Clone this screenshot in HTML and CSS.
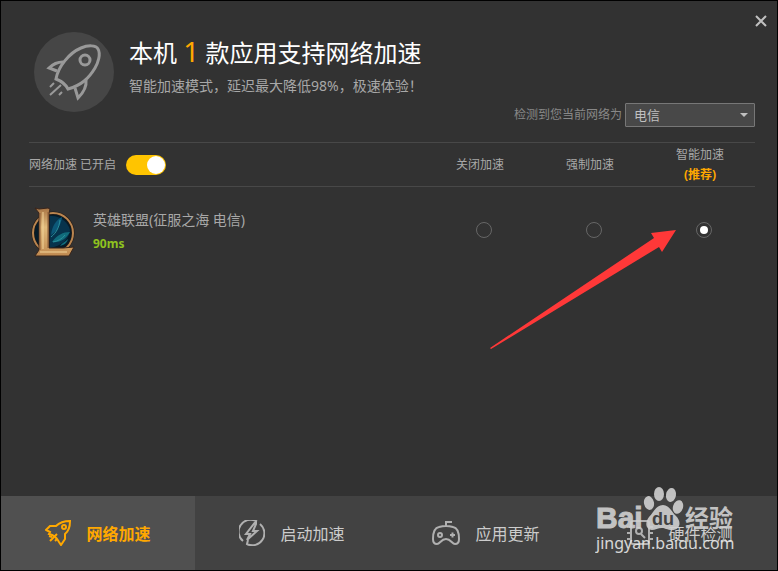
FILE: index.html
```html
<!DOCTYPE html>
<html lang="zh-CN">
<head>
  <meta charset="UTF-8">
  <meta name="viewport" content="width=device-width, initial-scale=1.0">
  <title>网络加速</title>
  <link rel="stylesheet" href="styles.css">
</head>
<body>
  <div class="window">
    <button class="close" type="button" aria-label="关闭">
      <svg width="12" height="12" viewBox="0 0 12 12"><path d="M1 1l10 10M11 1L1 11"/></svg>
    </button>

    <header class="header">
      <div class="avatar">
        <svg width="80" height="80" viewBox="0 0 80 80">
          <path d="M22 47C24 35 35 21 47 16C54 13 62 13 64 17C67 22 64 31 61 36C55 46 48 53 34 57C31 51 27 49 22 47Z"/>
          <circle cx="51" cy="28" r="5"/>
          <path d="M29 30C23 30 18 33 15 36L23 39M52 48C53 56 48 62 44 66L41 56"/>
          <path class="thin" d="M16 55l4-4M16 63l11-10M25 63l3-3"/>
        </svg>
      </div>
      <div class="intro">
        <h1>本机 <span class="count">1</span> 款应用支持网络加速</h1>
        <p>智能加速模式，延迟最大降低98%，极速体验！</p>
      </div>
    </header>

    <main class="main">
      <div class="network">
        <label for="isp">检测到您当前网络为</label>
        <select id="isp">
          <option>电信</option>
          <option>联通</option>
          <option>移动</option>
        </select>
      </div>

      <table class="games">
        <thead>
          <tr>
            <th class="name-col">
              <div class="switch-row">
                <label for="boost">网络加速 已开启</label>
                <input class="switch" type="checkbox" id="boost" checked>
              </div>
            </th>
            <th>关闭加速</th>
            <th>强制加速</th>
            <th>智能加速<br><b class="tip">(推荐)</b></th>
          </tr>
        </thead>
        <tbody>
          <tr>
            <td class="name-col">
              <div class="game">
                <svg class="logo" width="44" height="50" viewBox="0 0 44 50">
                  <defs>
                    <linearGradient id="gold" x1="0" y1="0" x2="0" y2="1">
                      <stop offset="0" stop-color="#a87545"/>
                      <stop offset=".4" stop-color="#e2bb7c"/>
                      <stop offset="1" stop-color="#c08a50"/>
                    </linearGradient>
                  </defs>
                  <circle cx="22" cy="26" r="20" fill="#061b28" stroke="#251a14" stroke-width="3"/>
                  <circle cx="22" cy="26" r="20" fill="none" stroke="#b98550" stroke-width="2"/>
                  <path d="M19 9c10-1 18 6 20 14c-1 10-9 16-20 18z" fill="#07334c"/>
                  <path d="M31 10c-6 3-10 9-11 18c6-4 10-10 11-18z" fill="#0c5878"/>
                  <path d="M39 25c-7 0-13 3-18 10c8 1 14-3 18-10zM29 39c2-3 5-4 8-7c-1 4-4 6-8 7z" fill="#116c7c"/>
                  <path d="M20 30c5-4 8-9 9-17M22 35c5-1 9-3 12-7" fill="none" stroke="#2b8f9c"/>
                  <path d="M4 1l4 1l9-1l2 1l-1 4v35h14l11-1l-5 9H4l4-6V6z" fill="url(#gold)" stroke="#39241a"/>
                  <path d="M9 6v37M17 5v36" fill="none" stroke="#8c5b36"/>
                  <path d="M12 5v37M9 45h27" fill="none" stroke="#f2d49a"/>
                </svg>
                <div>
                  <div class="game-name">英雄联盟(征服之海 电信)</div>
                  <div class="ping">90ms</div>
                </div>
              </div>
            </td>
            <td><input type="radio" name="mode" aria-label="关闭加速"></td>
            <td><input type="radio" name="mode" aria-label="强制加速"></td>
            <td><input type="radio" name="mode" aria-label="智能加速" checked></td>
          </tr>
        </tbody>
      </table>
    </main>

    <svg class="arrow" width="188" height="122" viewBox="0 0 188 122">
      <path d="M1 119L165 9L162 4L187 1L173 23L170 18L2 120Z"/>
    </svg>

    <nav class="tabs">
      <button class="tab active" type="button">
        <svg width="26" height="26" viewBox="0 0 26 26">
          <path d="M25 1C18 1 14 3 11 6L5 6L1 10L5 12L4 14C9 15 12 18 14 22L16 25L20 19V14C24 11 25 7 25 1Z"/>
          <circle cx="19" cy="7" r="2"/>
          <path d="M5 21l7-7M10 21l2-2M4 16l3 1"/>
        </svg>
        <span>网络加速</span>
      </button>
      <button class="tab" type="button">
        <svg width="26" height="26" viewBox="0 0 26 26">
          <path d="M4 21A12 12 0 0 1 17 1L7 14H11L8 20L18 11H14L17 4V1M21 4A12 12 0 0 1 8 24L9 20"/>
        </svg>
        <span>启动加速</span>
      </button>
      <button class="tab" type="button">
        <svg width="28" height="26" viewBox="0 0 28 26">
          <path d="M14 7V2H20M7 7Q14 5 21 7Q27 8 27 19Q27 24 23 24C20 24 19 19 14 19C9 19 8 24 5 24Q1 24 1 19Q1 8 7 7Z"/>
          <circle cx="8" cy="15" r="2"/>
          <path d="M18 15h5M20.5 12.5v5"/>
        </svg>
        <span>应用更新</span>
      </button>
      <button class="tab" type="button">
        <svg width="26" height="26" viewBox="0 0 26 26">
          <rect x="4" y="1" width="18" height="23" rx="2"/>
          <path d="M0 7h4M0 13h4M0 19h4M22 7h4M22 13h4M22 19h4M14 14l4 4"/>
          <circle cx="12" cy="11" r="3"/>
        </svg>
        <span>硬件检测</span>
      </button>
    </nav>

    <svg class="watermark" width="142" height="70" viewBox="0 0 142 70">
      <text class="wm-latin" x="2" y="43">Bai</text>
      <g class="paw">
        <ellipse cx="55" cy="18" rx="5" ry="7" transform="rotate(-12 55 18)"/>
        <ellipse cx="65" cy="9" rx="5" ry="7"/>
        <ellipse cx="77" cy="10" rx="5" ry="7" transform="rotate(10 77 10)"/>
        <ellipse cx="84" cy="22" rx="5" ry="7" transform="rotate(18 84 22)"/>
        <path d="M69 20C75 20 77 26 82 31C88 37 86 45 78 45C73 45 71 43 68 43C64 43 61 45 58 45C51 44 51 37 55 32C60 27 62 20 69 20Z"/>
      </g>
      <text class="wm-du" x="58" y="40">du</text>
      <text class="wm-cn" x="91" y="42">经验</text>
      <text class="wm-url" x="2" y="64">jingyan.baidu.com</text>
    </svg>
  </div>
</body>
</html>
```

FILE: styles.css
```css
* {
  box-sizing: border-box;
}

body {
  margin: 0;
  background: #323232;
  color: #a8a8a8;
  font-family: "Noto Sans", "Noto Sans CJK SC", sans-serif;
  font-size: 12px;
  line-height: 20px;
}

button, select, input {
  font-family: inherit;
  margin: 0;
}

.window {
  position: relative;
  display: flex;
  flex-direction: column;
  min-height: 100vh;
  border: 1px solid #000;
}

.close {
  position: absolute;
  top: 14px;
  right: 10px;
  display: flex;
  padding: 0;
  border: none;
  background: none;
  cursor: pointer;
}

.close svg {
  stroke: #c0c0c0;
  stroke-width: 2;
}

/* 顶部 */
.header {
  display: flex;
  gap: 15px;
  padding: 31px 33px 0;
  height: 102px;
}

.avatar {
  width: 80px;
  height: 80px;
  border-radius: 50%;
  background: #464646;
}

.avatar svg {
  fill: none;
  stroke: #999;
  stroke-width: 3;
}

.avatar .thin {
  stroke-width: 2;
}

.intro h1 {
  margin: 4px 0 0;
  color: #fff;
  font-size: 24px;
  line-height: 34px;
  font-weight: normal;
}

.count {
  color: #ffa800;
  font-size: 28px;
  line-height: 24px;
}

.intro p {
  margin: 6px 0 0;
  font-size: 14px;
}

/* 网络选择 */
.main {
  flex: 1;
  padding: 0 22px 0 28px;
}

.network {
  position: relative;
  display: flex;
  justify-content: flex-end;
  align-items: center;
  gap: 3px;
  color: #888;
}

.network select {
  appearance: none;
  width: 130px;
  height: 24px;
  padding: 0 8px;
  border: 1px solid #777;
  border-radius: 1px;
  background: #484848;
  color: #c0c0c0;
  font-size: 13px;
}

.network::after {
  content: "";
  position: absolute;
  right: 7px;
  top: 10px;
  border: 4px solid transparent;
  border-top-color: #c0c0c0;
  border-bottom: none;
  pointer-events: none;
}

/* 游戏列表 */
.games {
  width: 100%;
  margin-top: 15px;
  border-collapse: collapse;
  table-layout: fixed;
}

.games th {
  width: 110px;
  height: 44px;
  padding: 0;
  border-top: 1px solid #484848;
  border-bottom: 1px solid #484848;
  font-weight: normal;
  text-align: center;
}

.games td {
  height: 84px;
  padding: 0 0 0 8px;
  text-align: center;
}

.games .name-col {
  width: auto;
  padding: 0;
  text-align: left;
}

.tip {
  color: #ffa800;
}

.switch-row {
  display: flex;
  align-items: center;
  gap: 10px;
}

.switch {
  appearance: none;
  display: flex;
  justify-content: flex-end;
  width: 40px;
  height: 20px;
  padding: 1px;
  border-radius: 10px;
  background: #666;
  cursor: pointer;
}

.switch::before {
  content: "";
  width: 18px;
  height: 18px;
  border-radius: 50%;
  background: #fff;
}

.switch:checked {
  background: #ffc400;
}

.switch:not(:checked) {
  justify-content: flex-start;
}

.game {
  display: flex;
  align-items: center;
  gap: 18px;
  padding: 6px 0 0 2px;
}

.game-name {
  font-size: 14px;
  line-height: 24px;
}

.ping {
  color: #8fc31f;
  font-weight: bold;
  line-height: 24px;
}

input[type="radio"] {
  appearance: none;
  display: inline-grid;
  place-items: center;
  width: 16px;
  height: 16px;
  border: 1px solid #666;
  border-radius: 50%;
  vertical-align: middle;
}

input[type="radio"]:checked::before {
  content: "";
  width: 8px;
  height: 8px;
  border-radius: 50%;
  background: #fff;
}

.arrow {
  position: absolute;
  top: 228px;
  right: 100px;
  fill: #ff3838;
  pointer-events: none;
}

/* 底部标签 */
.tabs {
  display: flex;
  height: 74px;
  background: #424242;
}

.tab {
  flex: 1;
  display: flex;
  justify-content: center;
  align-items: center;
  gap: 15px;
  padding: 0;
  border: none;
  background: none;
  color: #ccc;
  font-size: 16px;
  cursor: pointer;
}

.tab svg {
  fill: none;
  stroke: #b0b0b0;
  stroke-width: 2;
}

.tab.active {
  background: #505050;
  color: #ffa800;
  font-weight: bold;
}

.tab.active svg {
  stroke: #ffa800;
}

/* 水印 */
.watermark {
  position: absolute;
  right: 41px;
  bottom: 15px;
  fill: #d0d0d0;
  opacity: .9;
  pointer-events: none;
}

.wm-latin {
  font: bold 30px "Liberation Sans", Arial, sans-serif;
  stroke: #d0d0d0;
}

.wm-du {
  font: bold 18px "Liberation Sans", Arial, sans-serif;
  fill: #424242;
}

.wm-cn {
  font: bold 24px "Noto Sans CJK SC", sans-serif;
}

.wm-url {
  font: 16px "Noto Sans", sans-serif;
  fill: #e8e8e8;
}
```
